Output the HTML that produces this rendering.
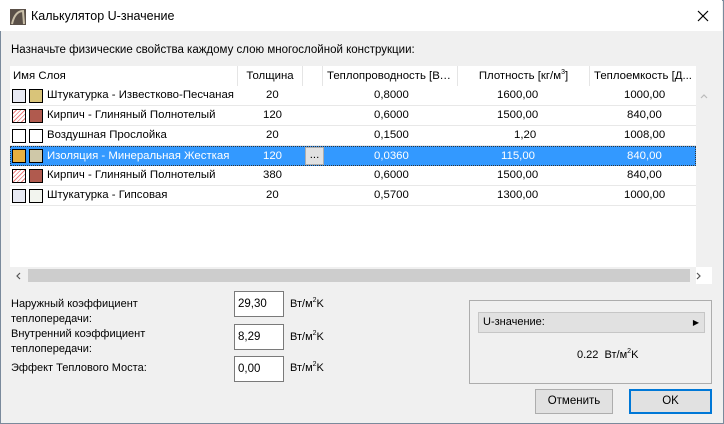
<!DOCTYPE html>
<html><head><meta charset="utf-8"><style>
*{box-sizing:border-box;margin:0;padding:0}
body{width:724px;height:424px;overflow:hidden;background:#f0f0f0;font-family:"Liberation Sans","DejaVu Sans",sans-serif;font-size:12px;color:#000;position:relative}
sup{font-size:7px;vertical-align:0;position:relative;top:-5px;line-height:0}
.win{position:absolute;left:0;top:0;width:724px;height:424px;border:1px solid #7a8a9c}
.title{position:absolute;left:0;top:0;width:722px;height:31px;background:#fff}
.abs{position:absolute;white-space:nowrap}
.table{position:absolute;left:10px;top:66px;width:702px;height:218px;background:#fff;font-size:11.4px}
.hdr{position:absolute;top:0;height:20px;line-height:20px;border-right:1px solid #e5e5e5;background:#fff;white-space:nowrap;overflow:hidden;text-overflow:ellipsis}
.row{position:absolute;left:0;width:686px;height:20px;border-bottom:1px solid #e8e8e8}
.row div{position:absolute;top:0;line-height:19px;white-space:nowrap}
.sel{background:#3399ff;color:#fff;border:1px dotted #333}
.sw{position:absolute;top:3px;width:14px;height:14px;border:1px solid #000}
.inp{position:absolute;left:234px;width:50px;height:26px;background:#fff;border:1px solid #7a7a7a;padding-left:3px;line-height:24px;font-size:11.5px}
.lbl{position:absolute;left:11px;font-size:11px;line-height:15px}
.unit{position:absolute;left:290px;font-size:11px}
.btn{position:absolute;height:25px;background:#e1e1e1;border:1px solid #adadad;text-align:center;line-height:23px}
</style></head><body>
<div class="win"></div>
<div class="title">
 <svg style="position:absolute;left:10px;top:9px" width="16" height="16"><rect width="16" height="16" fill="#5a5048"/><path d="M2 15 Q5 2 13 2 L14 15" fill="none" stroke="#c9bfa8" stroke-width="2"/></svg>
 <div class="abs" style="left:31px;top:9px;font-size:12.5px">Калькулятор U-значение</div>
 <svg style="position:absolute;left:697px;top:10px" width="12" height="12"><path d="M1 1L11 11M11 1L1 11" stroke="#000" stroke-width="1.2"/></svg>
</div>
<div class="abs" style="left:11px;top:44px;font-size:11.5px">Назначьте физические свойства каждому слою многослойной конструкции:</div>
<div class="table">
 <div class="hdr" style="left:0;width:228px;padding-left:3px">Имя Слоя</div>
 <div class="hdr" style="left:228px;width:65px;text-align:center">Толщина</div>
 <div class="hdr" style="left:293px;width:20px"></div>
 <div class="hdr" style="left:313px;width:135px;padding-left:4px;padding-right:4px">Теплопроводность [Вт/м·K]</div>
 <div class="hdr" style="left:448px;width:132px;text-align:center">Плотность [кг/м<sup>3</sup>]</div>
 <div class="hdr" style="left:580px;width:106px;text-align:center;border-right:0">Теплоемкость [Д...</div>
 <div style="position:absolute;left:686px;top:0;width:16px;height:20px;background:#f0f0f0"></div>
 <div style="position:absolute;left:686px;top:20px;width:16px;height:181px;background:#f0f0f0"><svg style="position:absolute;left:4px;top:7px" width="8" height="6"><path d="M1 5L4 2L7 5" fill="none" stroke="#bbb" stroke-width="1.2"/></svg></div>

 <div class="row" style="top:20px"><span class="sw" style="left:2px;background:#e8eaf4"></span><span class="sw" style="left:19px;background:#d9c479"></span><div style="left:37px">Штукатурка - Известково-Песчаная</div><div style="left:256px">20</div><div style="left:364px">0,8000</div><div style="left:487px">1600,00</div><div style="left:614px">1000,00</div></div>
 <div class="row" style="top:40px"><span class="sw" style="left:2px;background:repeating-linear-gradient(135deg,#fff 0 2px,#f08080 2px 3px)"></span><span class="sw" style="left:19px;background:#b05a4e"></span><div style="left:37px">Кирпич - Глиняный Полнотелый</div><div style="left:253px">120</div><div style="left:364px">0,6000</div><div style="left:487px">1500,00</div><div style="left:617px">840,00</div></div>
 <div class="row" style="top:60px"><span class="sw" style="left:2px;background:#fff"></span><span class="sw" style="left:19px;background:#fff"></span><div style="left:37px">Воздушная Прослойка</div><div style="left:256px">20</div><div style="left:364px">0,1500</div><div style="left:504px">1,20</div><div style="left:614px">1008,00</div></div>
 <div class="row sel" style="top:80px"><span class="sw" style="left:1px;top:2px;background:#e8b040"></span><span class="sw" style="left:18px;top:2px;background:#cfc8a8"></span><div style="left:36px">Изоляция - Минеральная Жесткая</div><div style="left:252px">120</div><div style="left:294px;top:0;width:19px;height:18px;background:#e1e1e1;border:1px solid #adadad;color:#000;text-align:center;line-height:14px">...</div><div style="left:363px">0,0360</div><div style="left:490px">115,00</div><div style="left:616px">840,00</div></div>
 <div class="row" style="top:100px"><span class="sw" style="left:2px;background:repeating-linear-gradient(135deg,#fff 0 2px,#f08080 2px 3px)"></span><span class="sw" style="left:19px;background:#b05a4e"></span><div style="left:37px">Кирпич - Глиняный Полнотелый</div><div style="left:253px">380</div><div style="left:364px">0,6000</div><div style="left:487px">1500,00</div><div style="left:617px">840,00</div></div>
 <div class="row" style="top:120px"><span class="sw" style="left:2px;background:#e8eaf4"></span><span class="sw" style="left:19px;background:#f2f4ee"></span><div style="left:37px">Штукатурка - Гипсовая</div><div style="left:256px">20</div><div style="left:364px">0,5700</div><div style="left:487px">1300,00</div><div style="left:614px">1000,00</div></div>

 <div style="position:absolute;left:0;top:201px;width:686px;height:17px;background:#f0f0f0"></div>
 <div style="position:absolute;left:18px;top:203px;width:662px;height:13px;background:#cdcdcd"></div>
 <svg style="position:absolute;left:5px;top:206px" width="6" height="8"><path d="M5 1L2 4L5 7" fill="none" stroke="#555" stroke-width="1.2"/></svg>
 <svg style="position:absolute;left:686px;top:206px" width="6" height="8"><path d="M1 1L4 4L1 7" fill="none" stroke="#555" stroke-width="1.2"/></svg>
</div>

<div class="lbl" style="top:297px">Наружный коэффициент<br>теплопередачи:</div>
<div class="inp" style="top:291px">29,30</div><div class="unit" style="top:298px">Вт/м<sup>2</sup>K</div>
<div class="lbl" style="top:327px">Внутренний коэффициент<br>теплопередачи:</div>
<div class="inp" style="top:324px">8,29</div><div class="unit" style="top:331px">Вт/м<sup>2</sup>K</div>
<div class="lbl" style="top:361px">Эффект Теплового Моста:</div>
<div class="inp" style="top:356px">0,00</div><div class="unit" style="top:362px">Вт/м<sup>2</sup>K</div>

<div style="position:absolute;left:469px;top:300px;width:243px;height:84px;border:1px solid #adadad"></div>
<div style="position:absolute;left:478px;top:312px;width:227px;height:21px;background:#e1e1e1;border:1px solid #c6c6c6;font-size:11px;line-height:19px;padding-left:4px">U-значение:<span style="position:absolute;right:5px;font-size:8px">&#9654;</span></div>
<div class="abs" style="left:577px;top:349px;font-size:11px">0.22 &nbsp;Вт/м<sup>2</sup>K</div>

<div class="btn" style="left:535px;top:389px;width:78px;font-size:11.5px">Отменить</div>
<div class="btn" style="left:629px;top:389px;width:83px;border:2px solid #0078d7;line-height:21px;font-size:11.5px">OK</div>
</body></html>
